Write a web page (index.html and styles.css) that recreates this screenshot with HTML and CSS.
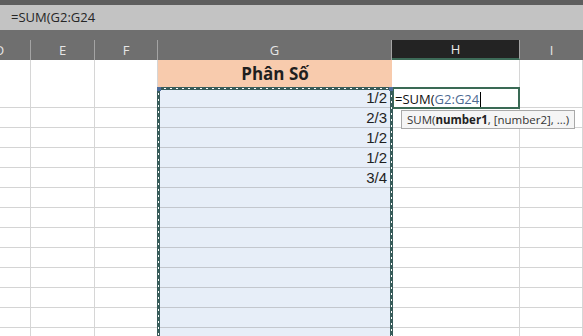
FILE: index.html
```html
<!DOCTYPE html>
<html>
<head>
<meta charset="utf-8">
<link rel="stylesheet" href="styles.css">
</head>
<body>
<div class="app">
  <div class="topstrip"></div>
  <div class="formula">=SUM(G2:G24</div>
  <div class="gap"></div>
  <div class="sheet">
    <div class="hd clip">D</div>
    <div class="hd">E</div>
    <div class="hd">F</div>
    <div class="hd">G</div>
    <div class="hd active">H</div>
    <div class="hd last">I</div>

    <div class="c r1"></div>
    <div class="c r1"></div>
    <div class="c r1"></div>
    <div class="c r1 title">Phân Số</div>
    <div class="c r1"></div>
    <div class="c r1"></div>

    <div class="c"></div><div class="c"></div><div class="c"></div>
    <div class="c g">1/2</div>
    <div class="c h2"><span class="edit">=SUM(<span class="ref">G2:G24</span><span class="caret"></span></span></div>
    <div class="c"></div>

    <div class="c"></div><div class="c"></div><div class="c"></div>
    <div class="c g">2/3</div><div class="c"></div><div class="c"></div>

    <div class="c"></div><div class="c"></div><div class="c"></div>
    <div class="c g">1/2</div><div class="c"></div><div class="c"></div>

    <div class="c"></div><div class="c"></div><div class="c"></div>
    <div class="c g">1/2</div><div class="c"></div><div class="c"></div>

    <div class="c"></div><div class="c"></div><div class="c"></div>
    <div class="c g">3/4</div><div class="c"></div><div class="c"></div>

    <div class="c"></div><div class="c"></div><div class="c"></div>
    <div class="c g"></div><div class="c"></div><div class="c"></div>

    <div class="c"></div><div class="c"></div><div class="c"></div>
    <div class="c g"></div><div class="c"></div><div class="c"></div>

    <div class="c"></div><div class="c"></div><div class="c"></div>
    <div class="c g"></div><div class="c"></div><div class="c"></div>

    <div class="c"></div><div class="c"></div><div class="c"></div>
    <div class="c g"></div><div class="c"></div><div class="c"></div>

    <div class="c"></div><div class="c"></div><div class="c"></div>
    <div class="c g"></div><div class="c"></div><div class="c"></div>

    <div class="c"></div><div class="c"></div><div class="c"></div>
    <div class="c g"></div><div class="c"></div><div class="c"></div>

    <div class="c"></div><div class="c"></div><div class="c"></div>
    <div class="c g"></div><div class="c"></div><div class="c"></div>

    <div class="c"></div><div class="c"></div><div class="c"></div>
    <div class="c g"></div><div class="c"></div><div class="c"></div>

    <svg class="marquee" width="240" height="260" viewBox="0 0 240 260">
      <path d="M1.5 260 V1.5 H234.5 V260" fill="none" stroke="#385c5a" stroke-width="3"/>
      <path d="M1.5 260 V1.5 H234.5 V260" fill="none" stroke="#ffffff" stroke-width="1" stroke-dasharray="2 4"/>
      <rect x="0" y="0" width="4" height="4" fill="#4d6c9c"/>
      <rect x="232" y="0" width="4" height="4" fill="#4d6c9c"/>
    </svg>
    <div class="tip">SUM(<b>number1</b>, [number2], ...)</div>
  </div>
</div>
</body>
</html>
```
FILE: styles.css
```css
html, body {
  margin: 0;
  padding: 0;
  background: #ffffff;
}
.app {
  width: 583px;
  height: 336px;
  overflow: hidden;
  font-family: "Open Sans", "Liberation Sans", sans-serif;
}
.topstrip {
  height: 5px;
  background: #5e5e5e;
}
.formula {
  height: 25px;
  background: #c3c3c3;
  color: #262626;
  font-size: 13px;
  line-height: 25px;
  padding-left: 11px;
  box-sizing: border-box;
}
.gap {
  height: 10px;
  background: #6f6f6f;
}
.sheet {
  position: relative;
  display: grid;
  grid-template-columns: 31px 64px 63px 234px 128px 63px;
  grid-template-rows: 20px 28px repeat(14, 20px);
}
.hd {
  background: #6f6f6f;
  color: #e6e6e6;
  font-size: 13px;
  line-height: 20px;
  text-align: center;
  border-right: 1px solid #a4a4a4;
  box-sizing: border-box;
}
.hd.clip {
  text-indent: -31px;
}
.hd.active {
  background: #232323;
  color: #ececec;
  border-bottom: 2px solid #3d6b58;
  line-height: 18px;
}
.hd.last {
  border-right: none;
}
.c {
  border-right: 1px solid #d6d6d6;
  border-bottom: 1px solid #d4d4d4;
  box-sizing: border-box;
  font-family: "Liberation Sans", sans-serif;
  font-size: 15px;
  color: #1f1f1f;
}
.r1 {
  border-bottom: none;
}
.title {
  background: #f8cbad;
  font-family: "Open Sans", "Liberation Sans", sans-serif;
  font-weight: 700;
  font-size: 17px;
  text-align: center;
  line-height: 27px;
  border-right: none;
}
.g {
  background: #e7eef8;
  border-bottom: 1px solid #c3c7ce;
  border-right: none;
  text-align: right;
  padding-right: 5px;
  line-height: 20px;
}
.h2 {
  border: 2px solid #3a6a55;
  margin-top: -1px;
  height: 22px;
  line-height: 19px;
  padding-left: 1px;
  position: relative;
  z-index: 2;
  background: #ffffff;
}
.edit {
  font-family: "Open Sans", "Liberation Sans", sans-serif;
  font-size: 13px;
  color: #111;
}
.ref {
  color: #4d6a92;
}
.caret {
  display: inline-block;
  width: 1px;
  height: 15px;
  background: #000;
  vertical-align: -3px;
  margin-left: 1px;
}
.marquee {
  position: absolute;
  left: 157px;
  top: 47px;
  z-index: 3;
}
.tip {
  position: absolute;
  left: 401px;
  top: 70px;
  width: 174px;
  height: 19px;
  box-sizing: border-box;
  background: #f5f5f5;
  border: 1px solid #a9a9a9;
  font-family: "Open Sans", "Liberation Sans", sans-serif;
  font-size: 11.5px;
  line-height: 17px;
  padding-left: 5px;
  color: #333;
  z-index: 4;
  white-space: nowrap;
}
.tip b {
  font-weight: 700;
  color: #222;
}
```
